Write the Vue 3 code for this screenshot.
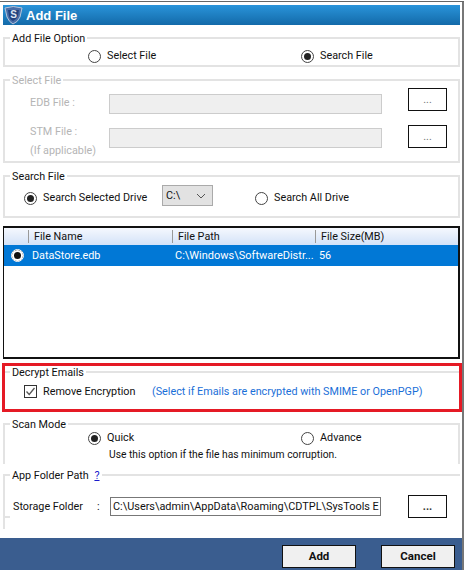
<template>
  <div class="window">
    <div class="titlebar">
      <svg class="logo" width="19" height="20" viewBox="0 0 19 20">
        <path d="M1 3 Q9 0 18 3 L16 12 Q14 17 9 19 Q5 17 3 12 Z" fill="#4a6ea8" stroke="#b9c6da" stroke-width="1" />
        <path d="M4 5 H15 L14 11 Q12 15 9 16 Q6 15 5 11 Z" fill="#24437f" />
        <text x="9.5" y="13" text-anchor="middle" class="logo-text">S</text>
      </svg>
      <span>Add File</span>
    </div>

    <fieldset class="group option-group">
      <legend>Add File Option</legend>
      <div class="radio-row option-row">
        <label class="radio wide"><i class="dot"></i>Select File</label>
        <label class="radio"><i class="dot on"></i>Search File</label>
      </div>
    </fieldset>

    <fieldset class="group select-group">
      <legend>Select File</legend>
      <div class="file-row edb">
        <span class="file-label">EDB File :</span>
        <div class="file-input"></div>
        <button class="dots faint">...</button>
      </div>
      <div class="file-row stm">
        <span class="file-label">STM File :<br />(If applicable)</span>
        <div class="file-input"></div>
        <button class="dots faint">...</button>
      </div>
    </fieldset>

    <fieldset class="group search-group">
      <legend>Search File</legend>
      <div class="search-row">
        <label class="radio selected"><i class="dot on"></i>Search Selected Drive</label>
        <div class="drive">
          <span>C:\</span>
          <svg width="10" height="6" viewBox="0 0 10 6"><path d="M1 1 L5 5 L9 1" fill="none" stroke="#555" /></svg>
        </div>
        <label class="radio all"><i class="dot"></i>Search All Drive</label>
      </div>
    </fieldset>

    <div class="table">
      <div class="thead">
        <span v-for="col in columns" :key="col" class="th">{{ col }}</span>
      </div>
      <div class="tr">
        <i class="dot row-dot"></i>
        <span class="td-name">DataStore.edb</span>
        <span class="td-path">C:\Windows\SoftwareDistr...</span>
        <span>56</span>
      </div>
    </div>

    <div class="highlight">
      <fieldset class="group decrypt-group">
        <legend>Decrypt Emails</legend>
        <div class="decrypt-row">
          <label class="check">
            <svg width="13" height="13" viewBox="0 0 13 13">
              <rect x="0.5" y="0.5" width="12" height="12" fill="#fff" stroke="#333" />
              <path d="M2.5 6.5 L5.2 9.5 L10.5 3" fill="none" stroke="#555" stroke-width="1.3" />
            </svg>
            Remove Encryption
          </label>
          <span class="hint">(Select if Emails are encrypted with SMIME or OpenPGP)</span>
        </div>
      </fieldset>
    </div>

    <fieldset class="group scan-group">
      <legend>Scan Mode</legend>
      <div class="radio-row scan-row">
        <label class="radio wide"><i class="dot on"></i>Quick</label>
        <label class="radio"><i class="dot"></i>Advance</label>
      </div>
      <p class="scan-note">Use this option if the file has minimum corruption.</p>
    </fieldset>

    <fieldset class="group folder-group">
      <legend>App Folder Path <a class="help">?</a></legend>
      <div class="folder-row">
        <span class="folder-label">Storage Folder</span>
        <span class="colon">:</span>
        <div class="folder-input">C:\Users\admin\AppData\Roaming\CDTPL\SysTools E</div>
        <button class="dots">...</button>
      </div>
    </fieldset>

    <div class="footer">
      <button class="action">Add</button>
      <button class="action">Cancel</button>
    </div>
  </div>
</template>

<script setup>
const columns = ["File Name", "File Path", "File Size(MB)"];
</script>

<style>
html,
body {
  margin: 0;
  background: #fff;
}
</style>

<style scoped>
.window {
  width: 464px;
  height: 570px;
  box-sizing: border-box;
  padding: 2px 2px 0 3px;
  box-shadow: inset 0 1px 0 #fff, inset 0 2px 0 #666, inset -2px 0 0 #777;
  display: flex;
  flex-direction: column;
  overflow: hidden;
  font-family: Roboto, "Open Sans", sans-serif;
  font-size: 10.8px;
  color: #111;
  background: #fff;
}
.titlebar {
  flex: none;
  margin: 3px 2px 0 0;
  height: 20px;
  display: flex;
  align-items: center;
  gap: 3px;
  padding-left: 1px;
  background: linear-gradient(#2a94da, #136aa9);
  color: #fff;
  font-family: "Liberation Sans", Arial, sans-serif;
  font-weight: bold;
  font-size: 13px;
}
.logo-text {
  font-family: "Liberation Sans", Arial, sans-serif;
  font-size: 10px;
  font-weight: bold;
  fill: #dfe6f2;
}
.group {
  margin: 0 2px 0 0;
  padding: 0;
  min-width: 0;
  border: 2px solid #e3e3e3;
  flex: none;
  box-sizing: border-box;
}
legend {
  margin-left: 5px;
  padding: 0 2px;
  height: 14px;
  line-height: 16px;
}
.option-group {
  margin-top: 6px;
  height: 36px;
}
.radio-row {
  display: flex;
}
.option-row {
  padding: 3px 0 0 83px;
}
.radio {
  display: flex;
  align-items: center;
  gap: 6px;
  line-height: 16px;
  white-space: nowrap;
}
.wide {
  width: 213px;
}
.dot {
  width: 11px;
  height: 11px;
  border: 1px solid #444;
  border-radius: 50%;
  background: #fff;
  flex: none;
  display: inline-block;
  position: relative;
}
.dot.on::after {
  content: "";
  position: absolute;
  inset: 2px;
  border-radius: 50%;
  background: #222;
}
.select-group {
  margin-top: 6px;
  height: 90px;
  color: #b5b5b5;
}
.file-row {
  display: flex;
  align-items: flex-start;
  padding: 1px 0 0 25px;
}
.file-row + .file-row {
  margin-top: 10px;
}
.file-label {
  width: 79px;
  line-height: 19px;
  flex: none;
}
.edb .file-label {
  margin-top: 5px;
}
.stm .file-label {
  margin-top: -3px;
}
.file-input {
  width: 271px;
  height: 18px;
  background: #efefef;
  border: 1px solid #ccc;
  flex: none;
  margin-top: 3px;
}
.edb .file-input {
  margin-top: 6px;
}
.dots {
  width: 39px;
  height: 23px;
  margin-left: 26px;
  border: 1px solid #111;
  background: #fff;
  padding: 0;
  font: inherit;
  font-weight: bold;
  color: #333;
  flex: none;
}
.dots.faint {
  color: #777;
  font-weight: normal;
}
.search-group {
  margin-top: 6px;
  height: 49px;
}
.search-row {
  display: flex;
  align-items: flex-start;
  padding: 7px 0 0 19px;
}
.selected {
  width: 138px;
}
.drive {
  width: 51px;
  height: 21px;
  margin: -5px 0 0 0;
  padding: 0 6px 0 3px;
  box-sizing: border-box;
  background: #e2e2e2;
  border: 1px solid #aaa;
  display: flex;
  align-items: center;
  justify-content: space-between;
}
.all {
  margin-left: 42px;
}
.table {
  flex: none;
  margin: 8px 2px 0 0;
  height: 133px;
  box-sizing: border-box;
  border: solid #111;
  border-width: 2px 2px 2px 1px;
}
.thead {
  display: grid;
  grid-template-columns: 24px 144px 143px 1fr;
  height: 17px;
  background: linear-gradient(#f5f8fe, #d3e2f8);
}
.thead::before {
  content: "";
}
.th {
  padding-left: 6px;
  margin: 2px 0;
  line-height: 13px;
  box-shadow: inset 1px 0 0 #999;
  white-space: nowrap;
}
.tr {
  display: flex;
  align-items: center;
  height: 21px;
  background: #0178d6;
  color: #fff;
}
.row-dot {
  margin-left: 7px;
  border: 1px solid #fff;
  background: #111;
  box-shadow: inset 0 0 0 2px #fff;
}
.td-name {
  margin-left: 8px;
  width: 143px;
  flex: none;
}
.td-path {
  width: 144px;
  flex: none;
  white-space: nowrap;
  font-size: 11px;
}
.highlight {
  flex: none;
  margin: 4px 0 0 -1px;
  height: 49px;
  border: 3px solid #e51a25;
  box-sizing: border-box;
}
.decrypt-group {
  border-width: 2px 0 0;
  margin: -1px 0 0;
}
.decrypt-row {
  display: flex;
  align-items: center;
  padding: 6px 0 0 19px;
}
.check {
  display: flex;
  align-items: center;
  gap: 6px;
  width: 128px;
  flex: none;
  white-space: nowrap;
}
.hint {
  color: #1a6fd8;
  white-space: nowrap;
}
.scan-group {
  margin-top: 5px;
  height: 47px;
  border-bottom: 0;
}
.scan-row {
  padding: 0 0 0 83px;
  margin-top: -1px;
}
.scan-note {
  margin: 2px 0 0 104px;
  line-height: 14px;
  white-space: nowrap;
  font-size: 10.3px;
}
.folder-group {
  margin-top: 4px;
  height: 61px;
  border-width: 2px 0 0 2px;
  position: relative;
}
.folder-group::after {
  content: "";
  position: absolute;
  left: 0;
  bottom: 0;
  width: 5px;
  height: 2px;
  background: #e3e3e3;
}
.help {
  color: #1a1acc;
  text-decoration: underline;
  margin-left: 3px;
}
.folder-row {
  display: flex;
  align-items: center;
  padding: 13px 0 0 8px;
}
.folder-label {
  width: 84px;
  flex: none;
  white-space: nowrap;
}
.colon {
  width: 13px;
  flex: none;
}
.folder-input {
  width: 271px;
  height: 19px;
  line-height: 17px;
  box-sizing: border-box;
  border: 1px solid #777;
  padding-left: 2px;
  overflow: hidden;
  white-space: nowrap;
  flex: none;
  font-size: 10.9px;
}
.folder-row .dots {
  margin-left: 27px;
}
.footer {
  flex: none;
  margin: 9px 0 0 -3px;
  height: 32px;
  background: #3a5d8f;
  display: flex;
  justify-content: flex-end;
  align-items: flex-start;
  padding: 7px 7px 0 0;
  box-sizing: border-box;
  gap: 25px;
}
.action {
  width: 74px;
  height: 23px;
  background: #f0f0f0;
  border: 1px solid #111;
  padding: 0 0 2px;
  font: inherit;
  font-weight: bold;
  font-size: 11.5px;
  color: #111;
}
</style>
